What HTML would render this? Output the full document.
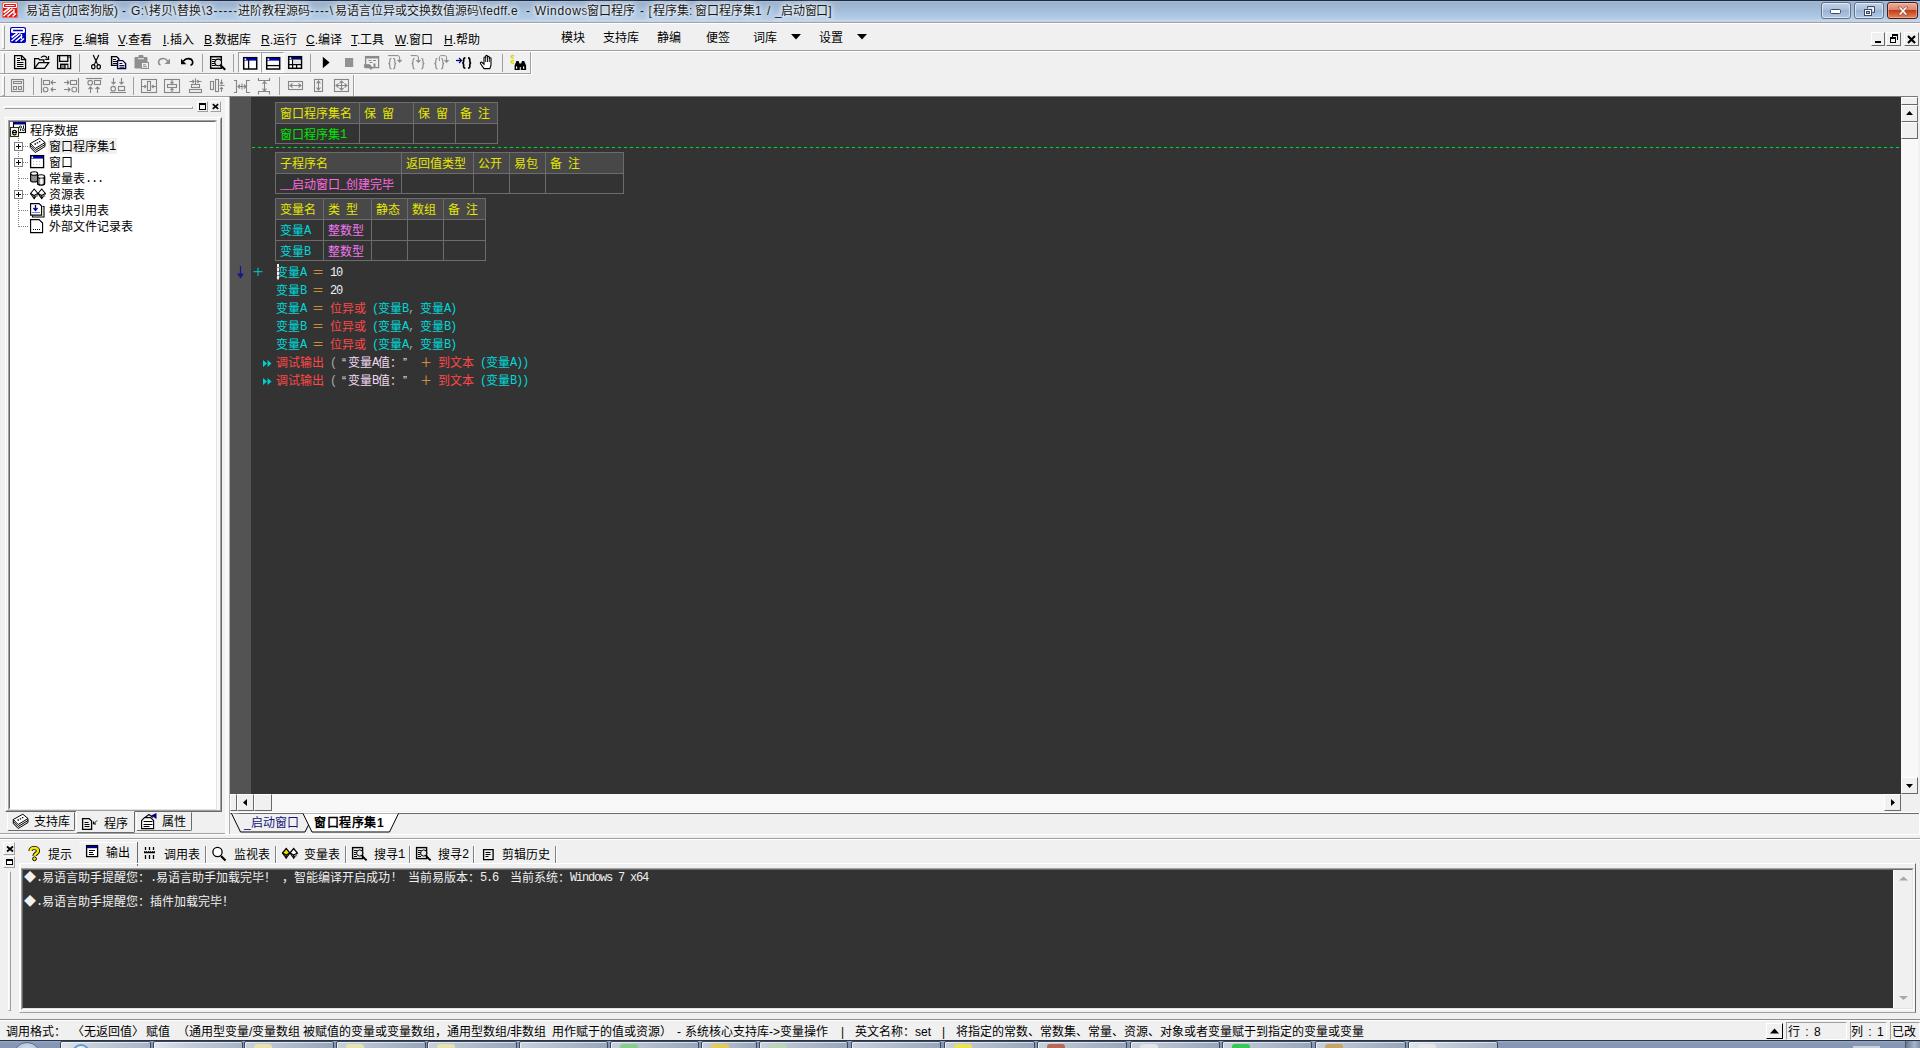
<!DOCTYPE html>
<html lang="zh-CN">
<head>
<meta charset="utf-8">
<title>易语言</title>
<style>
html,body{margin:0;padding:0;}
body{width:1920px;height:1048px;position:relative;overflow:hidden;background:#f0f0f0;font-family:"Liberation Sans",sans-serif;font-size:12px;color:#000;}
div,span,svg{position:absolute;box-sizing:border-box;}
svg{overflow:visible;}
.t{white-space:pre;line-height:12px;height:12px;font-size:12px;}
.m{font-family:"Liberation Mono",monospace;font-size:12px;letter-spacing:-1.2px;}
.j{white-space:nowrap;text-align-last:justify;}
u{text-decoration:underline;text-underline-offset:1px;}
.hl{background:#a0a0a0;height:1px;}
.wl{background:#fff;height:1px;}
.vl{background:#a0a0a0;width:1px;}
.sep{width:2px;border-left:1px solid #a0a0a0;border-right:1px solid #fff;}
.btn{background:#f0f0f0;border:1px solid;border-color:#fff #696969 #696969 #fff;}
.sunk{border:1px solid;border-color:#a0a0a0 #fff #fff #a0a0a0;}
/* title */
#title{left:0;top:0;width:1920px;height:23px;background:linear-gradient(#1b2a44 0,#1b2a44 1px,#a9bbd4 1px,#a9bbd4 2px,#9fb3cc 2px,#9db5d0 5px,#a2bdda 10px,#adc8e5 16px,#b4cee9 19px,#c6d3e5 20px,#c6d3e5 22px,#9ba1af 22px,#9ba1af 23px);}
#title .t{color:#1a1a1a;text-shadow:0 0 4px #fff,0 0 6px #fff,0 0 8px rgba(255,255,255,.8);}
.cap{top:2px;height:17px;border:1px solid #5f708c;border-radius:3px;background:linear-gradient(#c3d2e6,#a9bedb 45%,#9bb3d4 50%,#b1c8e3);box-shadow:inset 0 0 0 1px rgba(255,255,255,.55);}
/* editor */
#ed{background:#333;}
#gut{left:0;top:0;width:21px;height:697px;background:#535353;}
.tb{border-collapse:collapse;}
.c{border:1px solid #6c6c6c;height:22px;background:#333;}
.h{background:#484848;}
.y{color:#e6e600}.g{color:#00e600}.p{color:#ff6ae0}.cy{color:#00d8d8}.r{color:#ff4848}.o{color:#e8a040}.w{color:#f0f0f0}.lp{color:#f0d8f0}.gy{color:#a8a8a8}.p2{color:#f078f0}
/* output */
#out{left:22px;top:868px;width:1874px;height:140px;background:#333;}
</style>
</head>
<body>

<!-- ===== TITLE BAR ===== -->
<div id="title">
  <svg id="appico" style="left:2px;top:2px" width="16" height="16" viewBox="0 0 16 16"><rect x="0" y="0" width="16" height="16" rx="2.500" fill="#d81818"/><rect x="0.500" y="0.500" width="15" height="15" rx="2" fill="none" stroke="#ff8a70" stroke-width=".8"/><rect x="1" y="1" width="14" height="5" rx="1.200" fill="#fff"/><rect x="2" y="2" width="12" height="3" rx=".4" fill="#d81818"/><rect x="3.500" y="3" width="9" height="1" fill="#fff"/><path d="M1.500 10.500l6-4.500M1.500 14l9-7.500M5.500 14.500l6.500-5.500M10.500 14.500l3.500-3" stroke="#fff" stroke-width="1.600" fill="none"/><path d="M12 7v5" stroke="#fff" stroke-width="1.300"/></svg>
  <span class="t j" style="left:26px;top:5px;width:92.02px">易语言(加密狗版)</span>
  <span class="t" style="left:122px;top:5px">-</span>
  <span class="t" style="left:131px;top:5px;letter-spacing:.5px">G:\</span>
  <span class="t j" style="left:149px;top:5px;width:24.02px">拷贝</span>
  <span class="t" style="left:173px;top:5px">\</span>
  <span class="t j" style="left:177px;top:5px;width:24.02px">替换</span>
  <span class="t" style="left:202px;top:5px">\</span>
  <span class="t" style="left:206px;top:5px;letter-spacing:.9px">3-----</span>
  <span class="t j" style="left:238px;top:5px;width:72.02px">进阶教程源码</span>
  <span class="t" style="left:310px;top:5px;letter-spacing:.95px">----\</span>
  <span class="t j" style="left:335px;top:5px;width:144.02px">易语言位异或交换数值源码</span>
  <span class="t" style="left:479px;top:5px;letter-spacing:.3px">\fedff.e</span>
  <span class="t" style="left:526px;top:5px;letter-spacing:.7px">- Windows</span>
  <span class="t j" style="left:587px;top:5px;width:48.02px">窗口程序</span>
  <span class="t" style="left:640px;top:5px;letter-spacing:.6px">- [</span>
  <span class="t j" style="left:653px;top:5px;width:39.36px">程序集:</span>
  <span class="t j" style="left:695px;top:5px;width:66.71px">窗口程序集1</span>
  <span class="t" style="left:767px;top:5px">/</span>
  <span class="t j" style="left:775px;top:5px;letter-spacing:-.3px;width:56.24px">_启动窗口]</span>
  <div class="cap" style="left:1821px;width:30px"><svg style="left:8px;top:6px" width="12" height="6" viewBox="0 0 12 6"><rect x="0.5" y="0.5" width="10" height="4" rx="1" fill="#fff" stroke="#3c4a63"/></svg></div>
  <div class="cap" style="left:1854px;width:30px"><svg style="left:8px;top:2px" width="12" height="12" viewBox="0 0 12 12"><path d="M4.5 3.5v-2h7v6h-2" fill="none" stroke="#3c4a63" stroke-width="1"/><path d="M5 2.5h6v4h-1.5v-3h-4.5z" fill="#fff"/><rect x="1.5" y="4.5" width="7" height="6" fill="#fff" stroke="#3c4a63"/><rect x="3.5" y="6.5" width="3" height="2" fill="#b0c4de" stroke="#3c4a63"/></svg></div>
  <div class="cap" style="left:1887px;width:31px;border-color:#4a1c18;background:linear-gradient(#e8b0a0,#dc8468 45%,#c43c1e 50%,#d8683c 80%,#e08c5c);box-shadow:inset 0 0 0 1px rgba(255,200,180,.5)"><svg style="left:9px;top:3px" width="12" height="10" viewBox="0 0 12 10"><path d="M1 1h3l2 2.5 2-2.5h3l-3.5 4 3.5 4h-3l-2-2.5-2 2.5h-3l3.5-4z" fill="#fff" stroke="#7a3a30" stroke-width=".6"/></svg></div>
</div>
<div class="wl" style="left:0;top:23px;width:1920px"></div>

<!-- ===== MENU BAR ===== -->
<div id="menu" style="left:0;top:24px;width:1920px;height:26px">
  <div style="left:2px;top:1px;width:3px;height:24px;border:1px solid;border-color:#fff #a0a0a0 #a0a0a0 #fff"></div>
  <svg id="mico" style="left:10px;top:3px" width="16" height="16" viewBox="0 0 16 16"><rect x="0" y="0" width="16" height="16" rx="2" fill="#0000c0"/><rect x="1" y="1" width="14" height="5" rx="1.500" fill="#fff"/><rect x="3" y="2.700" width="10" height="1.600" rx=".5" fill="#0000c0"/><path d="M1.5 10.5l6-4.5M1.5 14l9-7.5M5.5 14.5l6.5-5.5M10.5 14.5l3.5-3" stroke="#fff" stroke-width="1.6" fill="none"/><path d="M11.5 7v5" stroke="#fff" stroke-width="1.3"/></svg>
  <span class="t j" style="left:31px;top:10px;width:33.36px"><u>F</u>.程序</span>
  <span class="t j" style="left:74px;top:10px;width:35.38px"><u>E</u>.编辑</span>
  <span class="t j" style="left:118px;top:10px;width:34.27px"><u>V</u>.查看</span>
  <span class="t j" style="left:163px;top:10px;width:30.71px"><u>I</u>.插入</span>
  <span class="t j" style="left:204px;top:10px;width:47.38px"><u>B</u>.数据库</span>
  <span class="t j" style="left:261px;top:10px;width:36.04px"><u>R</u>.运行</span>
  <span class="t j" style="left:306px;top:10px;width:36.04px"><u>C</u>.编译</span>
  <span class="t j" style="left:351px;top:10px;width:33.36px"><u>T</u>.工具</span>
  <span class="t j" style="left:395px;top:10px;width:38.04px"><u>W</u>.窗口</span>
  <span class="t j" style="left:444px;top:10px;width:36.04px"><u>H</u>.帮助</span>
  <span class="t j" style="left:561px;top:8px;width:24.02px">模块</span>
  <span class="t j" style="left:603px;top:8px;width:36.02px">支持库</span>
  <span class="t j" style="left:657px;top:8px;width:24.02px">静编</span>
  <span class="t j" style="left:706px;top:8px;width:24.02px">便签</span>
  <span class="t j" style="left:753px;top:8px;width:24.02px">词库</span>
  <span class="t j" style="left:819px;top:8px;width:24.02px">设置</span>
  <svg style="left:791px;top:10px" width="10" height="6" viewBox="0 0 10 6"><path d="M0 0h10l-5 5.5z" fill="#000"/></svg>
  <svg style="left:857px;top:10px" width="10" height="6" viewBox="0 0 10 6"><path d="M0 0h10l-5 5.5z" fill="#000"/></svg>
  <div class="btn" style="left:1871px;top:8px;width:14px;height:14px"><div style="left:3px;top:8px;width:6px;height:2px;background:#000"></div></div>
  <div class="btn" style="left:1886px;top:8px;width:15px;height:14px"><svg style="left:2px;top:1px" width="10" height="10" viewBox="0 0 10 10" shape-rendering="crispEdges"><path d="M3 0h6v2h-6zM8 2h1v4h-1zM3 2h1v1h-1z" fill="#000"/><path d="M1 3h6v2h-6zM1 5h1v4h-1zM6 5h1v4h-1zM1 8h6v1h-6z" fill="#000"/></svg></div>
  <div class="btn" style="left:1904px;top:8px;width:15px;height:14px"><svg style="left:2px;top:2px" width="10" height="9" viewBox="0 0 10 9"><path d="M1 1l7 7M8 1l-7 7" stroke="#000" stroke-width="2.2"/></svg></div>
</div>
<div class="hl" style="left:0;top:50px;width:1920px"></div>
<div class="wl" style="left:0;top:51px;width:1920px"></div>


<!-- ===== TOOLBARS ===== -->
<div id="tb1" style="left:0;top:52px;width:532px;height:23px">
  <div style="left:2px;top:1px;width:3px;height:21px;border:1px solid;border-color:#fff #a0a0a0 #a0a0a0 #fff"></div>
  <div class="hl" style="left:0;top:21px;width:531px"></div><div class="wl" style="left:0;top:22px;width:532px"></div>
  <div class="vl" style="left:530px;top:0;height:22px"></div><div style="left:531px;top:0;width:1px;height:22px;background:#fff"></div>
  <div class="vl" style="left:79px;top:2px;height:18px"></div>
  <div class="vl" style="left:202px;top:2px;height:18px"></div>
  <div class="vl" style="left:233px;top:2px;height:18px"></div>
  <div class="vl" style="left:310px;top:2px;height:18px"></div>
  <div class="vl" style="left:502px;top:2px;height:18px"></div>
  <div style="left:238px;top:0;width:23px;height:21px;background:#f6f6f6;border:1px solid;border-color:#a0a0a0 #fff #fff #a0a0a0"></div>
  <div style="left:261px;top:0;width:23px;height:21px;background:#f6f6f6;border:1px solid;border-color:#a0a0a0 #fff #fff #a0a0a0"></div>
</div>
<svg id="ic1" style="left:0;top:0" width="540" height="100" viewBox="0 0 540 100" fill="none" stroke-width="1.3" stroke="#000">
 <!-- new -->
 <path d="M14.6 55.6h7l4 4v9h-11z"/><path d="M21.5 55.6v4h4"/><path d="M17 58.5h3M17 60.5h3M17 62.5h6.5M17 64.5h6.5M17 66.5h6.5" stroke-width="1"/>
 <!-- open -->
 <path d="M34.6 68.4v-9.8h4l1 1.2h4.2v2.8"/><path d="M34.6 68.4l4.2-5.8h10l-4.2 5.8z"/><path d="M41 57.6c1.6-2 5-2.2 6.4.8" stroke-width="1.1"/><path d="M48.6 56v3.4h-3.4" stroke-width="1.1"/>
 <!-- save -->
 <rect x="57.6" y="55.6" width="13" height="13"/><path d="M59.6 55.6v5.8h8.2v-5.8"/><rect x="60" y="63.6" width="8.4" height="5" fill="#000" stroke="none"/><rect x="61.2" y="65" width="3.2" height="3" fill="#888" stroke="none"/><rect x="65.6" y="65" width="1.8" height="3.4" fill="#f0f0f0" stroke="none"/><rect x="68.6" y="56.6" width="1" height="1.4" fill="#000" stroke="none"/>
 <!-- cut -->
 <path d="M93.2 55l4 8.4M98.8 55l-4 8.4" stroke-width="1.2"/><path d="M95 63.5l-1 1.2M97 63.5l1 1.2" stroke-width="1.1"/><ellipse cx="93.3" cy="66.7" rx="1.7" ry="2.1" stroke-width="1.2"/><ellipse cx="98.7" cy="66.7" rx="1.7" ry="2.1" stroke-width="1.2"/>
 <!-- copy -->
 <path d="M111.6 56.6h5l2.2 2.2v6.6h-7.2z" stroke-width="1.4"/><path d="M113 59.5h3M113 61.5h4M113 63.5h4" stroke-width="1"/>
 <path d="M117.6 60.6h5l3 3v5h-8z" fill="#fff" stroke="#000040" stroke-width="1.4"/><path d="M119.4 63.5h3M119.4 65.5h5M119.4 67.2h5" stroke="#000040" stroke-width="1"/>
 <!-- paste (disabled) -->
 <g stroke="none" fill="#8e8e8e"><rect x="134.5" y="57" width="13" height="11.5" rx="1"/><rect x="138.5" y="55" width="5" height="3" rx="1"/><rect x="138" y="58.2" width="6" height="1" fill="#eee"/><rect x="141" y="62" width="8" height="7" fill="#8e8e8e"/><rect x="142" y="63" width="6" height="5" fill="#f0f0f0"/><rect x="143" y="64.3" width="3" height="1" /><rect x="143" y="66.2" width="4" height="1"/></g>
 <!-- redo (disabled) -->
 <path d="M160.5 65.2c-3-1.6-2.6-6.2 2.2-6.6 2.4-.2 4 1 5.2 2.6" stroke="#8e8e8e" stroke-width="1.5"/><path d="M170 58.6v5.4h-5.4z" fill="#8e8e8e" stroke="none"/>
 <!-- undo -->
 <path d="M190.5 65.4c3.4-1.6 3-6.4-2-6.8-2.4-.2-4 1-5.2 2.6" stroke-width="1.6"/><path d="M181 58.8v5.4h5.4z" fill="#000" stroke="none"/>
 <!-- find -->
 <rect x="210.7" y="56.7" width="10.6" height="11.6" stroke-width="1.5"/><path d="M212 59.5h3.5M212 61.5h3M212 63.5h3M212 65.5h3.5" stroke-width="1"/><circle cx="218.2" cy="62.4" r="3.3" fill="#e8e8e8" stroke-width="1.1"/><path d="M217 61.3h.1M219.4 61.3h.1M217 63.6h.1M219.4 63.6h.1" stroke="#666" stroke-width="1"/><path d="M220.6 65.2l4.6 4.6" stroke-width="2"/>
 <!-- layout 1 (pressed) -->
 <rect x="243.7" y="57.7" width="13" height="11.3" fill="#fff" stroke-width="1.5"/><rect x="244" y="58" width="12.4" height="2.6" fill="#0000a8" stroke="none"/><rect x="244.6" y="58.4" width="1.6" height="1.6" fill="#fff" stroke="none"/><path d="M248.6 60v9" stroke-width="1.3"/>
 <!-- layout 2 (pressed) -->
 <rect x="266.7" y="57.7" width="13" height="11.3" fill="#fff" stroke-width="1.5"/><rect x="267" y="58" width="12.4" height="2.6" fill="#0000a8" stroke="none"/><rect x="267.6" y="58.4" width="1.6" height="1.6" fill="#fff" stroke="none"/><path d="M266.7 65.6h13" stroke-width="1.3"/>
 <!-- layout 3 -->
 <rect x="288.7" y="56.7" width="12.8" height="11.6" fill="#fff" stroke-width="1.5"/><rect x="289" y="57" width="12.2" height="2.6" fill="#00006a" stroke="none"/><rect x="289.6" y="57.4" width="1.6" height="1.6" fill="#fff" stroke="none"/><path d="M292.6 59.5v9M288.7 64.6h13M296.6 65v3.5" stroke-width="1.3"/><rect x="293.4" y="60.4" width="7" height="3.4" fill="#ddd" stroke="none"/>
 <!-- play / stop -->
 <path d="M322.8 56.8v11.4l6.8-5.7z" fill="#000" stroke="none"/><rect x="345" y="58" width="8.2" height="9" fill="#929292" stroke="none"/>
 <!-- debug window (disabled) -->
 <g stroke="#8a8a8a"><rect x="365.6" y="56.6" width="13" height="11"/><path d="M365 57.5h14" stroke-width="2"/><path d="M368.5 60.5h3M373 60.5h3M369.5 62.5h3" stroke-width="1"/><path d="M364.4 64.6h5.4l2.6 3.4-1.4 1.6-2.2-2.2h-4.4z" fill="#8a8a8a" stroke-width=".8"/><path d="M374.5 63.5v3.6" stroke-width="2"/></g>
 <!-- step over / into / out (disabled) -->
 <g stroke="#8a8a8a" stroke-width="1.2">
  <path d="M391.4 58.4c-1.6 0-1.6.6-1.6 2v1.8c0 1-.4 1.4-1.4 1.4 1 0 1.4.4 1.4 1.4v1.8c0 1.4 0 2 1.6 2"/><path d="M393.2 58.4c1.6 0 1.6.6 1.6 2v1.8c0 1 .4 1.4 1.4 1.4-1 0-1.4.4-1.4 1.4v1.8c0 1.4 0 2-1.6 2"/>
  <path d="M388 55.6h9c2 0 2.6.8 2.6 2.6v3.4" stroke-width="1"/><path d="M397.4 60.2l2.2 2.4 2.2-2.4z" fill="#8a8a8a" stroke-width=".6"/>
  <path d="M414.6 58.4c-1.6 0-1.6.6-1.6 2v1.8c0 1-.4 1.4-1.4 1.4 1 0 1.4.4 1.4 1.4v1.8c0 1.4 0 2 1.6 2"/><path d="M421.4 58.4c1.6 0 1.6.6 1.6 2v1.8c0 1 .4 1.4 1.4 1.4-1 0-1.4.4-1.4 1.4v1.8c0 1.4 0 2-1.6 2"/>
  <path d="M410.6 55.6h5.6c1.6 0 2.2.8 2.2 2.4v3.6" stroke-width="1"/><path d="M416.2 60.4l2.2 2.4 2.2-2.4z" fill="#8a8a8a" stroke-width=".6"/>
  <path d="M437.4 58.4c-1.6 0-1.6.6-1.6 2v1.8c0 1-.4 1.4-1.4 1.4 1 0 1.4.4 1.4 1.4v1.8c0 1.4 0 2 1.6 2"/><path d="M441.2 58.4c1.6 0 1.6.6 1.6 2v1.8c0 1 .4 1.4 1.4 1.4-1 0-1.4.4-1.4 1.4v1.8c0 1.4 0 2-1.6 2"/>
  <path d="M439.4 61v-3.4c0-1.400.6-2 2-2h3c1.600 0 2.200.6 2.200 2.200v3.800" stroke-width="1"/><path d="M444.400 60.400l2.200 2.400 2.200-2.400z" fill="#8a8a8a" stroke-width=".6"/>
 </g>
 <!-- run to cursor -->
 <path d="M456 60.500h5" stroke="#000080" stroke-width="1.300"/><path d="M459 58l2.600 2.500-2.600 2.500" stroke="#000080" stroke-width="1.200"/>
 <path d="M465.400 57.800c-1.800 0-1.800.8-1.800 2.200v1.600c0 1-.4 1.400-1.400 1.400 1 0 1.400.4 1.400 1.400v1.600c0 1.600 0 2.200 1.800 2.200" stroke-width="1.700"/><path d="M468 57.800c1.800 0 1.800.8 1.800 2.200v1.600c0 1 .4 1.400 1.400 1.400-1 0-1.400.4-1.400 1.400v1.600c0 1.600 0 2.200-1.800 2.200" stroke-width="1.700"/>
 <!-- hand -->
 <path d="M484 68.600l-3.400-4.800c-.8-1.200.4-2.200 1.500-1.300l1.900 1.800v-6.300c0-1.300 1.700-1.300 1.700 0v-1.700c0-1.300 1.800-1.300 1.800 0v1c0-1.300 1.800-1.300 1.800 0v1.300c0-1.200 1.700-1.200 1.700 0v6c0 2-.6 2.800-1.200 4z" stroke-width="1.100" fill="#fff"/><path d="M485.700 58v4M487.500 57v5M489.300 58v4" stroke-width=".9"/>
 <!-- binoculars -->
 <g stroke="none" fill="#000"><path d="M514.600 70v-4.600l1.800-4.400h2.200l1.200 4v5z"/><path d="M520.800 70v-5l1.200-4h2.200l1.900 4.400v4.600z"/><rect x="519" y="63.500" width="3" height="3.500"/><rect x="516" y="66.500" width="1.200" height="2.200" fill="#fff"/><rect x="523" y="66.500" width="1.200" height="2.200" fill="#fff"/></g>
 <path d="M514 56.200c-.8-1-3-.8-3 .6s1.400 1.200 2.800 1.600M514 61.200c-.8-1-3-.8-3 .6s1.600 1.400 3 1.800" stroke="#d8d800" stroke-width="1.400"/>
</svg>
<div id="tb2" style="left:0;top:75px;width:355px;height:23px">
  <div style="left:2px;top:1px;width:3px;height:20px;border:1px solid;border-color:#fff #a0a0a0 #a0a0a0 #fff"></div>
  <div class="vl" style="left:353px;top:0;height:21px"></div><div style="left:354px;top:0;width:1px;height:21px;background:#fff"></div>
  <div class="vl" style="left:33px;top:2px;height:18px"></div>
  <div class="vl" style="left:133px;top:2px;height:18px"></div>
  <div class="vl" style="left:279px;top:2px;height:18px"></div>
</div>
<svg id="ic2" style="left:0;top:0" width="400" height="100" viewBox="0 0 400 100" fill="none" stroke-width="1.1" stroke="#868686">
 <!-- 1 -->
 <rect x="11.500" y="79.500" width="12" height="12"/><rect x="13.500" y="81.500" width="8" height="2"/><rect x="13.500" y="86.500" width="3" height="3"/><rect x="18.500" y="86.500" width="3" height="3"/>
 <!-- 2 align left -->
 <path d="M41.500 78v15"/><rect x="43.500" y="80.500" width="6" height="4"/><path d="M56 82.500h-5M53 80.500l-2 2 2 2"/><circle cx="45.600" cy="89.500" r="2.300"/><path d="M56 89.500h-5M53 87.500l-2 2 2 2"/>
 <!-- 3 align right -->
 <path d="M78.500 78v15"/><rect x="70.500" y="80.500" width="6" height="4"/><path d="M64 82.500h5M67 80.500l2 2-2 2"/><rect x="72" y="87.200" width="4.500" height="4.600" rx="1.500"/><path d="M64 89.500h6M68 87.500l2 2-2 2"/>
 <!-- 4 align top -->
 <path d="M86 78.500h16"/><circle cx="90.200" cy="82.700" r="2.300"/><rect x="94.500" y="80.500" width="6" height="4"/><path d="M90.500 93v-6M88.500 89l2-2 2 2M97.500 93v-6M95.500 89l2-2 2 2"/>
 <!-- 5 align bottom -->
 <path d="M110 92.500h16"/><path d="M113.500 78v6M111.500 82l2 2 2-2M121.500 78v6M119.500 82l2 2 2-2"/><circle cx="113.200" cy="88.700" r="2.300"/><rect x="118.500" y="86.500" width="6" height="4"/>
 <!-- 6 -->
 <rect x="141.500" y="79.500" width="15" height="13"/><rect x="147.500" y="81.500" width="3" height="9"/><path d="M142 86.500h4M144.500 85l1.500 1.500-1.500 1.500M156 86.500h-4M153.500 85l-1.500 1.500 1.500 1.500"/>
 <!-- 7 -->
 <rect x="164.500" y="79.500" width="15" height="13"/><rect x="167.500" y="84.500" width="9" height="3"/><path d="M172 80v3.500M170.500 82l1.500 1.500 1.500-1.500M172 92v-3.500M170.500 90l1.500-1.500 1.500 1.500"/>
 <!-- 8 -->
 <path d="M195.500 78.500v5.500M189.500 81.500h4.500M192.500 80l1.500 1.500-1.500 1.500M201.500 81.500h-4.500M198.500 80l-1.500 1.500 1.500 1.500"/><rect x="191.500" y="84.500" width="8" height="3"/><rect x="189.500" y="89.500" width="12" height="3"/>
 <!-- 9 -->
 <rect x="210.500" y="81.500" width="3" height="8"/><rect x="215.500" y="79.500" width="3" height="12"/><path d="M219.500 85.500h5M221.500 79.500v4.500M220 82.500l1.500 1.500 1.500-1.500M221.500 92v-4.500M220 89l1.500-1.500 1.500 1.500"/>
 <!-- 10 -->
 <path d="M234 80.500h2.500v12h-2.500M250 80.500h-3.500v12h3.500"/><path d="M238 86.500h8M242 83.500v6M240 84.500l-2 2 2 2M244 84.500l2 2-2 2"/>
 <!-- 11 -->
 <path d="M258.500 78v2.500h11v-2.500M258.500 94.500v-3h11v3"/><path d="M264.500 81.500v9.500M262.500 84l2-2.500 2 2.500M262.500 88.500l2 2.500 2-2.500"/>
 <!-- 12 -->
 <rect x="288.500" y="81.500" width="14" height="8"/><path d="M290 85.500h11M292.500 83.500l-2.500 2 2.500 2M298.500 83.500l2.500 2-2.500 2"/>
 <!-- 13 -->
 <rect x="314.500" y="79.500" width="8" height="12"/><path d="M318.500 81v9M316.500 83.500l2-2.500 2 2.500M316.500 87.500l2 2.500 2-2.500"/>
 <!-- 14 -->
 <rect x="334.500" y="79.500" width="14" height="12"/><path d="M336 85.500h11M341.500 81v9M338.500 83.500l-2.500 2 2.500 2M344.500 83.500l2.500 2-2.500 2M339.500 83l2-2 2 2M339.500 88l2 2 2-2"/>
</svg>
<div class="hl" style="left:0;top:96px;width:355px"></div>


<!-- ===== LEFT PANEL ===== -->
<div class="wl" style="left:0;top:97px;width:226px"></div>
<div style="left:4px;top:106px;width:189px;height:3px;border:1px solid;border-color:#fff #a0a0a0 #a0a0a0 #fff"></div>
<div class="btn" style="left:197px;top:101px;width:11px;height:11px;border-color:#fff #a0a0a0 #a0a0a0 #fff"><svg style="left:1px;top:1px" width="8" height="8" viewBox="0 0 8 8" shape-rendering="crispEdges"><path d="M.5 .5h6v6h-6z" fill="none" stroke="#000" stroke-width="1"/><path d="M0 1h7" stroke="#000" stroke-width="2"/></svg></div>
<div class="btn" style="left:210px;top:101px;width:11px;height:11px;border-color:#fff #a0a0a0 #a0a0a0 #fff"><svg style="left:1px;top:1px" width="8" height="8" viewBox="0 0 8 8"><path d="M.8 1.200l5.400 4.600M6.200 1.200l-5.400 4.600" stroke="#000" stroke-width="1.700"/></svg></div>
<div style="left:5px;top:117px;width:217px;height:695px;border:1px solid;border-color:#fff #696969 #696969 #fff;background:#f8f8f8"></div>
<div style="left:6px;top:118px;width:215px;height:693px;border:1px solid;border-color:#f0f0f0 #a0a0a0 #a0a0a0 #f0f0f0"></div>
<div style="left:8px;top:120px;width:209px;height:690px;background:#fff;border:1px solid;border-color:#a0a0a0 #e3e3e3 #e3e3e3 #a0a0a0"></div>
<div style="left:9px;top:121px;width:207px;height:688px;border:1px solid;border-color:#696969 #fff #fff #696969"></div>
<svg style="left:0;top:0" width="226" height="240" viewBox="0 0 226 240" shape-rendering="crispEdges"><g stroke="#808080" stroke-width="1" stroke-dasharray="1 1" fill="none"><path d="M18.500 138v89"/><path d="M23 146.500h5"/><path d="M23 162.500h5"/><path d="M19 178.500h9"/><path d="M23 194.500h5"/><path d="M19 210.500h9"/><path d="M19 226.500h9"/></g>
<rect x="14.500" y="142.500" width="8" height="8" fill="#fff" stroke="#808080"/><path d="M16 146.500h5M18.500 144v5" stroke="#000" stroke-width="1"/>
<rect x="14.500" y="158.500" width="8" height="8" fill="#fff" stroke="#808080"/><path d="M16 162.500h5M18.500 160v5" stroke="#000" stroke-width="1"/>
<rect x="14.500" y="190.500" width="8" height="8" fill="#fff" stroke="#808080"/><path d="M16 194.500h5M18.500 192v5" stroke="#000" stroke-width="1"/>
</svg>
<div style="left:48px;top:138px;width:69px;height:16px;background:#f0f0f0"></div>
<span class="t j" style="left:30px;top:125px;width:48.02px">程序数据</span>
<span class="t j" style="left:49px;top:141px;width:60.02px">窗口程序集</span>
<span class="t m  " style="left:109px;top:141px">1</span>
<span class="t j" style="left:49px;top:157px;width:24.02px">窗口</span>
<span class="t j" style="left:49px;top:173px;width:36.02px">常量表</span>
<span class="t m  " style="left:85px;top:173px">...</span>
<span class="t j" style="left:49px;top:189px;width:36.02px">资源表</span>
<span class="t j" style="left:49px;top:205px;width:60.02px">模块引用表</span>
<span class="t j" style="left:49px;top:221px;width:84.02px">外部文件记录表</span>
<svg style="left:0;top:0" width="60" height="240" viewBox="0 0 60 240" fill="none" stroke="#000" stroke-width="1.100">
 <!-- root -->
 <rect x="13.500" y="122.500" width="12" height="10" fill="#fff"/><rect x="13" y="122" width="13" height="2.500" fill="#000080" stroke="none"/>
 <circle cx="20.500" cy="127" r="1.100" stroke-width=".9"/><circle cx="23.300" cy="129.600" r="1.100" stroke-width=".9"/><path d="M23.500 125.500v2.500M20.500 129v2" stroke-width=".9"/>
 <rect x="10.500" y="127.500" width="8" height="9" fill="#fff" stroke="#303000"/><path d="M12.500 132.600h4c0-3-4-3-4 0s2.500 2.600 4 1.400" stroke-width="1.100"/>
 <!-- stack -->
 <path d="M30.3 143.5L39.8 138.2L45.0 142.5L35.2 148.5z" fill="#fff" stroke-width="1"/><path d="M30.3 143.5V147.5L35.2 152.5L45.0 146.5V142.5M30.3 145.5L35.2 150.5L45.0 144.5" stroke-width="1"/><path d="M35.2 144.0h.1M37.4 142.8h.1M39.6 141.6h.1" stroke-width="1.300" stroke-linecap="square"/>
 <!-- window -->
 <rect x="30.600" y="155.600" width="13" height="12" fill="#fff" stroke-width="1.300"/><rect x="31" y="156" width="12.300" height="2.600" fill="#0000a8" stroke="none"/><rect x="31.600" y="156.500" width="1.500" height="1.500" fill="#fff" stroke="none"/><path d="M33 161.500h9M33 164.500h9" stroke="#c0c0c0" stroke-dasharray="1 2"/>
 <!-- cylinders -->
 <path d="M30.600 173.500v7c0 2 7 2 7 0v-7" fill="#909090"/><ellipse cx="34.100" cy="173.500" rx="3.500" ry="1.800" fill="#fff"/>
 <path d="M37.600 176.500v7c0 2 7 2 7 0v-7" fill="#909090"/><ellipse cx="41.100" cy="176.500" rx="3.500" ry="1.800" fill="#fff"/><path d="M41.500 178.500v6.500" stroke="#fff" stroke-width="2.500"/><path d="M37.600 176.500v7c0 2 7 2 7 0v-7"/>
 <!-- diamonds -->
 <path d="M30.500 193.500l3.700-4.500 3.700 4.500-3.700 5z" fill="#fff"/><path d="M30.500 193.500l3.700 2 3.700-2M34.200 195.500v3.500"/><path d="M34.400 196l3.200-2v3z" fill="#808080" stroke="none"/>
 <path d="M38 193.500l3.700-4.500 3.700 4.500-3.700 5z" fill="#fff"/><path d="M38 193.500l3.700 2 3.700-2M41.700 195.500v3.500"/><path d="M41.900 196l3.200-2v3z" fill="#808080" stroke="none"/>
 <!-- module ref -->
 <path d="M32.500 215.500v1.500h11.500v-10.500h-1.500" /><path d="M30.600 203.600h8.500l2.500 2.500v9h-11z" fill="#fff"/><path d="M35.500 205v5M33.500 208l2 2.500 2-2.500" stroke="#0000a0" stroke-width="1.300"/><path d="M32.500 212.500h7" stroke="#0000a0" stroke-dasharray="1 1"/>
 <!-- file -->
 <path d="M30.600 219.600h8.500l3.500 3.500v9.500h-12z" fill="#fff"/><path d="M33 229.500h7" stroke-dasharray="1 1"/>
</svg>
<div style="left:7px;top:812px;width:68px;height:19px;border:1px solid;border-color:#f0f0f0 #696969 #696969 #fff;border-radius:0 0 2px 2px"></div>
<div style="left:76px;top:811px;width:59px;height:22px;background:#f0f0f0;border:1px solid;border-color:#f0f0f0 #696969 #696969 #fff;border-radius:0 0 2px 2px"></div>
<div style="left:136px;top:812px;width:56px;height:19px;border:1px solid;border-color:#f0f0f0 #696969 #696969 #fff;border-radius:0 0 2px 2px"></div>
<svg style="left:0;top:800px" width="200" height="40" viewBox="0 800 200 40" fill="none" stroke="#000" stroke-width="1.100">
 <path d="M13.3 819.5L22.8 814.2L28.0 818.5L18.2 824.5z" fill="#fff" stroke-width="1"/><path d="M13.3 819.5V823.5L18.2 828.5L28.0 822.5V818.5M13.3 821.5L18.2 826.5L28.0 820.5" stroke-width="1"/><path d="M18.2 820.0h.1M20.4 818.8h.1M22.6 817.6h.1" stroke-width="1.300" stroke-linecap="square"/>
 <path d="M82.600 818.600h6.500l2.500 2.500v8.300h-9z" stroke-width="1.300"/><path d="M84.500 822.500h4M84.500 824.500h5M84.500 826.500h5" stroke-width="1"/><path d="M97 820.500l-3.500 3.500M93.500 821.500v2.500h2.500" stroke-width="1"/>
 <path d="M141.600 828.600v-8l3-3h6l3 3v8z" fill="#fff"/><path d="M143.500 821.500h9M143.500 824.500h9M143.500 826.500h6" stroke-width="1"/><path d="M145 817.500l4-3 4 3" /><path d="M151 815.500l5.500-2.500v6z" fill="#000080" stroke="none"/>
</svg>
<div class="hl" style="left:0;top:833px;width:226px"></div>
<span class="t j" style="left:34px;top:816px;width:36.02px">支持库</span>
<span class="t j" style="left:104px;top:818px;width:24.02px">程序</span>
<span class="t j" style="left:162px;top:816px;width:24.02px">属性</span>
<!-- ===== EDITOR ===== -->
<div style="left:225px;top:97px;width:4px;height:737px;background:#f8f8f8"></div><div style="left:229px;top:97px;width:1px;height:737px;background:#b0b0b0"></div>
<div style="left:229px;top:96px;width:1689px;height:1px;background:#7a7a7a"></div>
<div id="ed" style="left:230px;top:97px;width:1671px;height:697px"><div id="gut"></div>
<div class="c h" style="left:45px;top:5px;width:85px;height:22px"></div>
<div class="c h" style="left:129px;top:5px;width:55px;height:22px"></div>
<div class="c h" style="left:183px;top:5px;width:43px;height:22px"></div>
<div class="c h" style="left:225px;top:5px;width:43px;height:22px"></div>
<div class="c" style="left:45px;top:26px;width:85px;height:21px"></div>
<div class="c" style="left:129px;top:26px;width:55px;height:21px"></div>
<div class="c" style="left:183px;top:26px;width:43px;height:21px"></div>
<div class="c" style="left:225px;top:26px;width:43px;height:21px"></div>
<span class="t y j" style="left:50px;top:11px;width:72.02px">窗口程序集名</span>
<span class="t y j" style="left:134px;top:11px;width:12.02px">保</span>
<span class="t y j" style="left:152px;top:11px;width:12.02px">留</span>
<span class="t y j" style="left:188px;top:11px;width:12.02px">保</span>
<span class="t y j" style="left:206px;top:11px;width:12.02px">留</span>
<span class="t y j" style="left:230px;top:11px;width:12.02px">备</span>
<span class="t y j" style="left:248px;top:11px;width:12.02px">注</span>
<span class="t g j" style="left:50px;top:32px;width:60.02px">窗口程序集</span>
<span class="t m g " style="left:110px;top:32px">1</span>
<div style="left:22px;top:50px;width:1649px;height:1px;background:repeating-linear-gradient(90deg,#20c040 0,#20c040 3px,#0a5a1a 3px,#0a5a1a 6px)"></div>
<div class="c h" style="left:45px;top:55px;width:127px;height:22px"></div>
<div class="c h" style="left:171px;top:55px;width:73px;height:22px"></div>
<div class="c h" style="left:243px;top:55px;width:37px;height:22px"></div>
<div class="c h" style="left:279px;top:55px;width:37px;height:22px"></div>
<div class="c h" style="left:315px;top:55px;width:79px;height:22px"></div>
<div class="c" style="left:45px;top:76px;width:127px;height:21px"></div>
<div class="c" style="left:171px;top:76px;width:73px;height:21px"></div>
<div class="c" style="left:243px;top:76px;width:37px;height:21px"></div>
<div class="c" style="left:279px;top:76px;width:37px;height:21px"></div>
<div class="c" style="left:315px;top:76px;width:79px;height:21px"></div>
<span class="t y j" style="left:50px;top:61px;width:48.02px">子程序名</span>
<span class="t y j" style="left:176px;top:61px;width:60.02px">返回值类型</span>
<span class="t y j" style="left:248px;top:61px;width:24.02px">公开</span>
<span class="t y j" style="left:284px;top:61px;width:24.02px">易包</span>
<span class="t y j" style="left:320px;top:61px;width:12.02px">备</span>
<span class="t y j" style="left:338px;top:61px;width:12.02px">注</span>
<span class="t m p " style="left:50px;top:82px">__</span>
<span class="t p j" style="left:62px;top:82px;width:48.02px">启动窗口</span>
<span class="t m p " style="left:110px;top:82px">_</span>
<span class="t p j" style="left:116px;top:82px;width:48.02px">创建完毕</span>
<div class="c h" style="left:45px;top:101px;width:49px;height:22px"></div>
<div class="c h" style="left:93px;top:101px;width:49px;height:22px"></div>
<div class="c h" style="left:141px;top:101px;width:37px;height:22px"></div>
<div class="c h" style="left:177px;top:101px;width:37px;height:22px"></div>
<div class="c h" style="left:213px;top:101px;width:43px;height:22px"></div>
<div class="c" style="left:45px;top:122px;width:49px;height:22px"></div>
<div class="c" style="left:93px;top:122px;width:49px;height:22px"></div>
<div class="c" style="left:141px;top:122px;width:37px;height:22px"></div>
<div class="c" style="left:177px;top:122px;width:37px;height:22px"></div>
<div class="c" style="left:213px;top:122px;width:43px;height:22px"></div>
<div class="c" style="left:45px;top:143px;width:49px;height:21px"></div>
<div class="c" style="left:93px;top:143px;width:49px;height:21px"></div>
<div class="c" style="left:141px;top:143px;width:37px;height:21px"></div>
<div class="c" style="left:177px;top:143px;width:37px;height:21px"></div>
<div class="c" style="left:213px;top:143px;width:43px;height:21px"></div>
<span class="t y j" style="left:50px;top:107px;width:36.02px">变量名</span>
<span class="t y j" style="left:98px;top:107px;width:12.02px">类</span>
<span class="t y j" style="left:116px;top:107px;width:12.02px">型</span>
<span class="t y j" style="left:146px;top:107px;width:24.02px">静态</span>
<span class="t y j" style="left:182px;top:107px;width:24.02px">数组</span>
<span class="t y j" style="left:218px;top:107px;width:12.02px">备</span>
<span class="t y j" style="left:236px;top:107px;width:12.02px">注</span>
<span class="t cy j" style="left:50px;top:128px;width:24.02px">变量</span>
<span class="t m cy " style="left:74px;top:128px">A</span>
<span class="t p2 j" style="left:98px;top:128px;width:36.02px">整数型</span>
<span class="t cy j" style="left:50px;top:149px;width:24.02px">变量</span>
<span class="t m cy " style="left:74px;top:149px">B</span>
<span class="t p2 j" style="left:98px;top:149px;width:36.02px">整数型</span>
<span class="t cy j" style="left:46px;top:170px;width:24.02px">变量</span>
<span class="t m cy " style="left:70px;top:170px">A</span>
<span class="t o j" style="left:82px;top:170px;width:12.02px">＝</span>
<span class="t m w " style="left:100px;top:170px">10</span>
<span class="t cy j" style="left:46px;top:188px;width:24.02px">变量</span>
<span class="t m cy " style="left:70px;top:188px">B</span>
<span class="t o j" style="left:82px;top:188px;width:12.02px">＝</span>
<span class="t m w " style="left:100px;top:188px">20</span>
<span class="t cy j" style="left:46px;top:206px;width:24.02px">变量</span>
<span class="t m cy " style="left:70px;top:206px">A</span>
<span class="t o j" style="left:82px;top:206px;width:12.02px">＝</span>
<span class="t r j" style="left:100px;top:206px;width:36.02px">位异或</span>
<span class="t m cy " style="left:142px;top:206px">(</span>
<span class="t cy j" style="left:148px;top:206px;width:24.02px">变量</span>
<span class="t m cy " style="left:172px;top:206px">B</span>
<span class="t m gy " style="left:178px;top:206px">,</span>
<span class="t cy j" style="left:190px;top:206px;width:24.02px">变量</span>
<span class="t m cy " style="left:214px;top:206px">A)</span>
<span class="t cy j" style="left:46px;top:224px;width:24.02px">变量</span>
<span class="t m cy " style="left:70px;top:224px">B</span>
<span class="t o j" style="left:82px;top:224px;width:12.02px">＝</span>
<span class="t r j" style="left:100px;top:224px;width:36.02px">位异或</span>
<span class="t m cy " style="left:142px;top:224px">(</span>
<span class="t cy j" style="left:148px;top:224px;width:24.02px">变量</span>
<span class="t m cy " style="left:172px;top:224px">A</span>
<span class="t m gy " style="left:178px;top:224px">,</span>
<span class="t cy j" style="left:190px;top:224px;width:24.02px">变量</span>
<span class="t m cy " style="left:214px;top:224px">B)</span>
<span class="t cy j" style="left:46px;top:242px;width:24.02px">变量</span>
<span class="t m cy " style="left:70px;top:242px">A</span>
<span class="t o j" style="left:82px;top:242px;width:12.02px">＝</span>
<span class="t r j" style="left:100px;top:242px;width:36.02px">位异或</span>
<span class="t m cy " style="left:142px;top:242px">(</span>
<span class="t cy j" style="left:148px;top:242px;width:24.02px">变量</span>
<span class="t m cy " style="left:172px;top:242px">A</span>
<span class="t m gy " style="left:178px;top:242px">,</span>
<span class="t cy j" style="left:190px;top:242px;width:24.02px">变量</span>
<span class="t m cy " style="left:214px;top:242px">B)</span>
<span class="t r j" style="left:46px;top:260px;width:48.02px">调试输出</span>
<span class="t m gy " style="left:100px;top:260px">(</span>
<span class="t lp " style="left:112px;top:260px">“</span>
<span class="t lp j" style="left:118px;top:260px;width:24.02px">变量</span>
<span class="t m lp " style="left:142px;top:260px">A</span>
<span class="t lp j" style="left:148px;top:260px;width:24.02px">值：</span>
<span class="t lp " style="left:173px;top:260px">”</span>
<span class="t o j" style="left:190px;top:260px;width:12.02px">＋</span>
<span class="t r j" style="left:208px;top:260px;width:36.02px">到文本</span>
<span class="t m cy " style="left:250px;top:260px">(</span>
<span class="t cy j" style="left:256px;top:260px;width:24.02px">变量</span>
<span class="t m cy " style="left:280px;top:260px">A))</span>
<svg style="left:33px;top:263px" width="9" height="7" viewBox="0 0 9 7"><path d="M0 0l4 3.500-4 3.500zM4.500 0l4 3.500-4 3.500z" fill="#00d0d0"/></svg>
<span class="t r j" style="left:46px;top:278px;width:48.02px">调试输出</span>
<span class="t m gy " style="left:100px;top:278px">(</span>
<span class="t lp " style="left:112px;top:278px">“</span>
<span class="t lp j" style="left:118px;top:278px;width:24.02px">变量</span>
<span class="t m lp " style="left:142px;top:278px">B</span>
<span class="t lp j" style="left:148px;top:278px;width:24.02px">值：</span>
<span class="t lp " style="left:173px;top:278px">”</span>
<span class="t o j" style="left:190px;top:278px;width:12.02px">＋</span>
<span class="t r j" style="left:208px;top:278px;width:36.02px">到文本</span>
<span class="t m cy " style="left:250px;top:278px">(</span>
<span class="t cy j" style="left:256px;top:278px;width:24.02px">变量</span>
<span class="t m cy " style="left:280px;top:278px">B))</span>
<svg style="left:33px;top:281px" width="9" height="7" viewBox="0 0 9 7"><path d="M0 0l4 3.500-4 3.500zM4.500 0l4 3.500-4 3.500z" fill="#00d0d0"/></svg>
<svg style="left:6px;top:169px" width="10" height="13" viewBox="0 0 10 13"><path d="M4.500 0v9" stroke="#14148c" stroke-width="1.200" fill="none"/><path d="M1 7.500l3.500 5 3.500-5z" fill="#14148c"/></svg>
<svg style="left:23px;top:170px" width="10" height="10" viewBox="0 0 10 10"><path d="M5 .5v8.500M.5 4.700h9" stroke="#00d0d0" stroke-width="1" fill="none"/></svg>
<div style="left:47px;top:167px;width:2px;height:16px;background:repeating-linear-gradient(#ffe8e8 0,#ffe8e8 3px,#e06060 3px,#e06060 4px)"></div>
</div>
<div id="vsb" style="left:1901px;top:97px;width:17px;height:697px;background:#f8f8f8">
 <div class="btn" style="left:0;top:0;width:17px;height:8px"></div>
 <div class="btn" style="left:0;top:8px;width:17px;height:17px"><svg style="left:4px;top:5px" width="7" height="4" viewBox="0 0 7 4"><path d="M0 4h7l-3.500-4z" fill="#000"/></svg></div>
 <div class="btn" style="left:0;top:25px;width:17px;height:17px"></div>
 <div class="btn" style="left:0;top:680px;width:17px;height:17px"><svg style="left:4px;top:6px" width="7" height="4" viewBox="0 0 7 4"><path d="M0 0h7l-3.500 4z" fill="#000"/></svg></div>
</div>
<div id="hsb" style="left:230px;top:794px;width:1671px;height:17px;background:#f8f8f8">
 <div class="btn" style="left:0;top:0;width:7px;height:17px"></div>
 <div class="btn" style="left:7px;top:0;width:17px;height:17px"><svg style="left:5px;top:4px" width="4" height="7" viewBox="0 0 4 7"><path d="M4 0v7l-4-3.500z" fill="#000"/></svg></div>
 <div class="btn" style="left:24px;top:0;width:18px;height:17px"></div>
 <div class="btn" style="left:1654px;top:0;width:17px;height:17px"><svg style="left:6px;top:4px" width="4" height="7" viewBox="0 0 4 7"><path d="M0 0v7l4-3.500z" fill="#000"/></svg></div>
</div>
<div style="left:230px;top:812px;width:1689px;height:1px;background:#fff"></div><div style="left:230px;top:813px;width:1689px;height:1px;background:#696969"></div><div style="left:1919px;top:813px;width:1px;height:21px;background:#fff"></div>
<svg style="left:226px;top:813px" width="200" height="22" viewBox="0 0 200 22">
 <path d="M5.500 .5l9 18.500h64.500l7-14" fill="#f0f0f0" stroke="#000" stroke-width="1"/>
 <path d="M77 .5l9 18.500h77.500l9-18.500z" fill="#fff" stroke="none"/>
 <path d="M77 .5l9 18.500h77.500l9-18.500" fill="none" stroke="#000" stroke-width="1"/>
</svg>
<span class="t j" style="left:244px;top:817px;color:#141478;width:54.71px">_启动窗口</span>
<span class="t j" style="left:314px;top:817px;font-weight:bold;letter-spacing:.6px;width:70.30px">窗口程序集1</span>
<!-- ===== SPLIT LINES ===== -->
<div class="wl" style="left:0;top:834px;width:1920px;height:1px"></div>
<div class="hl" style="left:0;top:838px;width:1920px"></div><div class="wl" style="left:0;top:839px;width:1920px"></div>
<!-- ===== OUTPUT ===== -->
<div class="btn" style="left:3px;top:842px;width:12px;height:13px;border-color:#fff #a0a0a0 #a0a0a0 #fff"><svg style="left:2px;top:3px" width="8" height="6" viewBox="0 0 8 6"><path d="M1 .5l6 5M7 .5l-6 5" stroke="#000" stroke-width="1.700"/></svg></div>
<div class="btn" style="left:3px;top:856px;width:12px;height:12px;border-color:#fff #a0a0a0 #a0a0a0 #fff"><svg style="left:2px;top:2px" width="8" height="7" viewBox="0 0 8 7" shape-rendering="crispEdges"><path d="M.5 .5h6v5h-6z" fill="#fff" stroke="#000"/><path d="M0 1h7" stroke="#000" stroke-width="2"/></svg></div>
<div style="left:8px;top:871px;width:3px;height:140px;border:1px solid;border-color:#fff #a0a0a0 #a0a0a0 #fff"></div>
<div style="left:78px;top:842px;width:60px;height:24px;border-right:1px solid #696969"></div>
<div style="left:79px;top:842px;width:58px;height:1px;background:#fff"></div>
<div style="left:205px;top:846px;width:2px;height:17px;border-left:1px solid #808080;border-right:1px solid #fff"></div>
<div style="left:275px;top:846px;width:2px;height:17px;border-left:1px solid #808080;border-right:1px solid #fff"></div>
<div style="left:345px;top:846px;width:2px;height:17px;border-left:1px solid #808080;border-right:1px solid #fff"></div>
<div style="left:409px;top:846px;width:2px;height:17px;border-left:1px solid #808080;border-right:1px solid #fff"></div>
<div style="left:473px;top:846px;width:2px;height:17px;border-left:1px solid #808080;border-right:1px solid #fff"></div>
<div style="left:555px;top:846px;width:2px;height:17px;border-left:1px solid #808080;border-right:1px solid #fff"></div>
<span class="t j" style="left:48px;top:849px;width:24.02px">提示</span>
<span class="t j" style="left:106px;top:847px;width:24.02px">输出</span>
<span class="t j" style="left:164px;top:849px;width:36.02px">调用表</span>
<span class="t j" style="left:234px;top:849px;width:36.02px">监视表</span>
<span class="t j" style="left:304px;top:849px;width:36.02px">变量表</span>
<span class="t j" style="left:374px;top:849px;width:24.02px">搜寻</span>
<span class="t m  " style="left:398px;top:849px">1</span>
<span class="t j" style="left:438px;top:849px;width:24.02px">搜寻</span>
<span class="t m  " style="left:462px;top:849px">2</span>
<span class="t j" style="left:502px;top:849px;width:48.02px">剪辑历史</span>
<svg style="left:0;top:840px" width="560" height="28" viewBox="0 840 560 28" fill="none" stroke="#000" stroke-width="1.200">
 <!-- ? -->
 <path d="M30.500 851c0-4 7.500-4 7.500 0 0 2.500-3.500 2.500-3.500 5" stroke="#000" stroke-width="4.200"/><path d="M30.500 851c0-4 7.500-4 7.500 0 0 2.500-3.500 2.500-3.500 5" stroke="#f4e800" stroke-width="2.400"/><circle cx="34.500" cy="858.800" r="1.900" fill="#f4e800" stroke-width="1"/>
 <!-- output -->
 <rect x="86.600" y="845.600" width="11" height="11" fill="#fff" stroke-width="1.300"/><rect x="87" y="846" width="10.400" height="2.200" fill="#000080" stroke="none"/><path d="M89 850.500h6M89 852.500h4M89 854.500h5" stroke-width="1"/>
 <!-- call table -->
 <g stroke-width="1.300"><path d="M145.500 847v3M149.500 847v3M153.500 847v3M144 852.500h11M145.500 855v4M149.500 855v4M153.500 855v4" /><path d="M144.300 851l1.200 1.500 1.200-1.500M148.300 851l1.200 1.500 1.200-1.500M152.300 851l1.200 1.500 1.200-1.500" stroke-width="1"/></g>
 <!-- watch -->
 <circle cx="217.500" cy="852" r="4.600" fill="#fff" stroke-width="1.300"/><path d="M221 856l4.500 4.500" stroke-width="2.200"/>
 <!-- var table -->
 <path d="M282.500 853l3.700-4.500 3.700 4.500-3.700 5z" fill="#f0e000"/><path d="M282.500 853l3.700 2 3.700-2M286.200 855v3.500"/>
 <path d="M290 853l3.700-4.500 3.700 4.500-3.700 5z" fill="#fff"/><path d="M290 853l3.700 2 3.700-2M293.700 855v3.500"/><path d="M293.900 855.500l3.200-2v3z" fill="#808080" stroke="none"/>
 <!-- find1 find2 -->
 <g id="f1"><rect x="352.600" y="847.600" width="10" height="11" stroke-width="1.400"/><path d="M354 850.500h3M354 852.500h2.500M354 854.500h2.500M354 856.500h3" stroke-width="1"/><circle cx="359.700" cy="853" r="3.100" fill="#e8e8e8" stroke-width="1"/><path d="M362 856l4.600 4.400" stroke-width="1.900"/></g>
 <g transform="translate(64 0)"><rect x="352.600" y="847.600" width="10" height="11" stroke-width="1.400"/><path d="M354 850.500h3M354 852.500h2.500M354 854.500h2.500M354 856.500h3" stroke-width="1"/><circle cx="359.700" cy="853" r="3.100" fill="#e8e8e8" stroke-width="1"/><path d="M362 856l4.600 4.400" stroke-width="1.900"/></g>
 <!-- clip history -->
 <path d="M483.600 849.600h6.500l3 0v10h-9.500z" stroke-width="1.300"/><path d="M485.500 852.500h5M485.500 854.500h5M485.500 856.500h3" stroke-width="1"/>
</svg>
<div style="left:19px;top:863px;width:1897px;height:150px;border:1px solid;border-color:#fff #696969 #a0a0a0 #fff"></div>
<div style="left:20px;top:864px;width:1px;height:148px;background:#fff"></div>
<div style="left:21px;top:868px;width:1893px;height:142px;border:1px solid;border-color:#a0a0a0 #fff #fff #a0a0a0"></div>
<div style="left:22px;top:869px;width:1891px;height:140px;border:1px solid;border-color:#696969 #e3e3e3 #e3e3e3 #696969"></div>
<div id="out" style="left:23px;top:870px;width:1870px;height:138px"></div>
<div style="left:1893px;top:870px;width:19px;height:138px;background:#f0f0f0;border-left:1px solid #fff"><svg style="left:5px;top:6px" width="9" height="5" viewBox="0 0 9 5"><path d="M0 4.500l4.500-4 4.500 4z" fill="#a8a8a8"/></svg><svg style="left:5px;top:126px" width="9" height="5" viewBox="0 0 9 5"><path d="M0 0l4.500 4 4.500-4z" fill="#a8a8a8"/></svg></div>
<span class="t w " style="left:24px;top:872px">◆</span>
<span class="t m w " style="left:36px;top:872px">.</span>
<span class="t w j" style="left:42px;top:872px;width:108.02px">易语言助手提醒您：</span>
<span class="t m w " style="left:150px;top:872px">.</span>
<span class="t w j" style="left:156px;top:872px;width:120.02px">易语言助手加载完毕！</span>
<span class="t w j" style="left:282px;top:872px;width:108.02px">，智能编译开启成功</span>
<span class="t m w " style="left:390px;top:872px">!</span>
<span class="t w j" style="left:408px;top:872px;width:72.02px">当前易版本：</span>
<span class="t m w " style="left:480px;top:872px">5.6</span>
<span class="t w j" style="left:510px;top:872px;width:60.02px">当前系统：</span>
<span class="t m w " style="left:570px;top:872px">Windows 7 x64</span>
<span class="t w " style="left:24px;top:896px">◆</span>
<span class="t m w " style="left:36px;top:896px">.</span>
<span class="t w j" style="left:42px;top:896px;width:192.02px">易语言助手提醒您：插件加载完毕！</span>
<!-- ===== STATUS ===== -->
<div class="hl" style="left:0;top:1019px;width:1920px;background:#8c8c8c"></div><div class="wl" style="left:0;top:1020px;width:1920px"></div>
<span class="t j" style="left:6px;top:1026px;width:60.02px">调用格式：</span>
<span class="t j" style="left:72px;top:1026px;width:72.02px">〈无返回值〉</span>
<span class="t j" style="left:146px;top:1026px;width:24.02px">赋值</span>
<span class="t j" style="left:177px;top:1026px;width:123.36px">（通用型变量/变量数组</span>
<span class="t j" style="left:303px;top:1026px;width:144.02px">被赋值的变量或变量数组，</span>
<span class="t j" style="left:447px;top:1026px;width:99.36px">通用型数组/非数组</span>
<span class="t j" style="left:552px;top:1026px;width:120.02px">用作赋于的值或资源）</span>
<span class="t" style="left:677px;top:1026px">-</span>
<span class="t j" style="left:685px;top:1026px;width:143.04px">系统核心支持库-&gt;变量操作</span>
<span class="t" style="left:841px;top:1026px">|</span>
<span class="t j" style="left:855px;top:1026px;width:76.04px">英文名称：set</span>
<span class="t" style="left:942px;top:1026px">|</span>
<span class="t j" style="left:956px;top:1026px;width:408.02px">将指定的常数、常数集、常量、资源、对象或者变量赋于到指定的变量或变量</span>
<div style="left:1766px;top:1023px;width:17px;height:16px;border:1px solid;border-color:#fff #000 #000 #fff;background:#f0f0f0"><svg style="left:3px;top:4px" width="9" height="6" viewBox="0 0 9 6"><path d="M0 5.500l4.500-5 4.500 5z" fill="#000"/></svg></div>
<div class="sunk" style="left:1786px;top:1022px;width:61px;height:18px"></div>
<div class="sunk" style="left:1850px;top:1022px;width:37px;height:18px"></div>
<div class="sunk" style="left:1890px;top:1022px;width:30px;height:18px"></div>
<span class="t j" style="left:1788px;top:1026px;letter-spacing:1px;width:33.71px">行 : 8</span><span class="t j" style="left:1851px;top:1026px;letter-spacing:1px;width:33.71px">列 : 1</span><span class="t j" style="left:1892px;top:1026px;width:24.02px">已改</span>
<!-- ===== TASKBAR SLIVER ===== -->
<div id="task" style="left:0;top:1040px;width:1920px;height:8px;background:linear-gradient(#2a3446 0,#2a3446 1px,#98a8c2 1px,#8798b6 3px,#8596b4 8px);overflow:hidden">
<div style="left:13px;top:2px;width:28px;height:28px;border-radius:14px;border:1px solid #5a6c88;background:radial-gradient(circle at 50% 30%,#d8e4f0,#9cb0cc 70%)"></div>
<div style="left:60px;top:1px;width:91px;height:9px;border:1px solid #3c485c;border-radius:2px 2px 0 0;background:linear-gradient(90deg,#dfe4ec,#c4ccd8 40%,#a8b3c6);box-shadow:inset 1px 1px 0 rgba(255,255,255,.6)"></div>
<div style="left:153px;top:1px;width:90px;height:9px;border:1px solid #3c485c;border-radius:2px 2px 0 0;background:linear-gradient(90deg,#dfe4ec,#c4ccd8 40%,#a8b3c6);box-shadow:inset 1px 1px 0 rgba(255,255,255,.6)"></div>
<div style="left:244px;top:1px;width:90px;height:9px;border:1px solid #3c485c;border-radius:2px 2px 0 0;background:linear-gradient(90deg,#c9d0dc,#b0bacb 50%,#98a5bb);box-shadow:inset 1px 1px 0 rgba(255,255,255,.6)"></div>
<div style="left:254px;top:4px;width:18px;height:6px;border-radius:3px 3px 0 0;background:#efe6a8;opacity:.85"></div>
<div style="left:336px;top:1px;width:90px;height:9px;border:1px solid #3c485c;border-radius:2px 2px 0 0;background:linear-gradient(90deg,#c9d0dc,#b0bacb 50%,#98a5bb);box-shadow:inset 1px 1px 0 rgba(255,255,255,.6)"></div>
<div style="left:346px;top:4px;width:18px;height:6px;border-radius:3px 3px 0 0;background:#efe6a8;opacity:.85"></div>
<div style="left:427px;top:1px;width:90px;height:9px;border:1px solid #3c485c;border-radius:2px 2px 0 0;background:linear-gradient(90deg,#c9d0dc,#b0bacb 50%,#98a5bb);box-shadow:inset 1px 1px 0 rgba(255,255,255,.6)"></div>
<div style="left:437px;top:4px;width:18px;height:6px;border-radius:3px 3px 0 0;background:#efe6a8;opacity:.85"></div>
<div style="left:519px;top:1px;width:89px;height:9px;border:1px solid #3c485c;border-radius:2px 2px 0 0;background:linear-gradient(90deg,#c9d0dc,#b0bacb 50%,#98a5bb);box-shadow:inset 1px 1px 0 rgba(255,255,255,.6)"></div>
<div style="left:610px;top:1px;width:89px;height:9px;border:1px solid #3c485c;border-radius:2px 2px 0 0;background:linear-gradient(90deg,#c9d0dc,#b0bacb 50%,#98a5bb);box-shadow:inset 1px 1px 0 rgba(255,255,255,.6)"></div>
<div style="left:620px;top:4px;width:18px;height:6px;border-radius:3px 3px 0 0;background:#7fd07f;opacity:.85"></div>
<div style="left:701px;top:1px;width:56px;height:9px;border:1px solid #3c485c;border-radius:2px 2px 0 0;background:linear-gradient(90deg,#c9d0dc,#b0bacb 50%,#98a5bb);box-shadow:inset 1px 1px 0 rgba(255,255,255,.6)"></div>
<div style="left:711px;top:4px;width:18px;height:6px;border-radius:3px 3px 0 0;background:#e8d040;opacity:.85"></div>
<div style="left:759px;top:1px;width:89px;height:9px;border:1px solid #3c485c;border-radius:2px 2px 0 0;background:linear-gradient(90deg,#c9d0dc,#b0bacb 50%,#98a5bb);box-shadow:inset 1px 1px 0 rgba(255,255,255,.6)"></div>
<div style="left:769px;top:4px;width:18px;height:6px;border-radius:3px 3px 0 0;background:#b8d8b0;opacity:.85"></div>
<div style="left:851px;top:1px;width:90px;height:9px;border:1px solid #3c485c;border-radius:2px 2px 0 0;background:linear-gradient(90deg,#c9d0dc,#b0bacb 50%,#98a5bb);box-shadow:inset 1px 1px 0 rgba(255,255,255,.6)"></div>
<div style="left:944px;top:1px;width:91px;height:9px;border:1px solid #3c485c;border-radius:2px 2px 0 0;background:linear-gradient(90deg,#c9d0dc,#b0bacb 50%,#98a5bb);box-shadow:inset 1px 1px 0 rgba(255,255,255,.6)"></div>
<div style="left:954px;top:4px;width:18px;height:6px;border-radius:3px 3px 0 0;background:#f0e840;opacity:.85"></div>
<div style="left:1037px;top:1px;width:90px;height:9px;border:1px solid #3c485c;border-radius:2px 2px 0 0;background:linear-gradient(90deg,#c9d0dc,#b0bacb 50%,#98a5bb);box-shadow:inset 1px 1px 0 rgba(255,255,255,.6)"></div>
<div style="left:1047px;top:4px;width:18px;height:6px;border-radius:3px 3px 0 0;background:#b05a40;opacity:.85"></div>
<div style="left:1130px;top:1px;width:90px;height:9px;border:1px solid #3c485c;border-radius:2px 2px 0 0;background:linear-gradient(90deg,#c9d0dc,#b0bacb 50%,#98a5bb);box-shadow:inset 1px 1px 0 rgba(255,255,255,.6)"></div>
<div style="left:1140px;top:4px;width:18px;height:6px;border-radius:3px 3px 0 0;background:#e8e8e8;opacity:.85"></div>
<div style="left:1222px;top:1px;width:90px;height:9px;border:1px solid #3c485c;border-radius:2px 2px 0 0;background:linear-gradient(90deg,#c9d0dc,#b0bacb 50%,#98a5bb);box-shadow:inset 1px 1px 0 rgba(255,255,255,.6)"></div>
<div style="left:1232px;top:4px;width:18px;height:6px;border-radius:3px 3px 0 0;background:#20c840;opacity:.85"></div>
<div style="left:1315px;top:1px;width:91px;height:9px;border:1px solid #3c485c;border-radius:2px 2px 0 0;background:linear-gradient(90deg,#c9d0dc,#b0bacb 50%,#98a5bb);box-shadow:inset 1px 1px 0 rgba(255,255,255,.6)"></div>
<div style="left:1325px;top:4px;width:18px;height:6px;border-radius:3px 3px 0 0;background:#c8a050;opacity:.85"></div>
<div style="left:1408px;top:1px;width:90px;height:9px;border:1px solid #3c485c;border-radius:2px 2px 0 0;background:linear-gradient(90deg,#dfe4ec,#c4ccd8 40%,#a8b3c6);box-shadow:inset 1px 1px 0 rgba(255,255,255,.6)"></div>
<div style="left:1418px;top:4px;width:18px;height:6px;border-radius:3px 3px 0 0;background:#e8e8e8;opacity:.85"></div>
<div style="left:72px;top:4px;width:18px;height:18px;border-radius:9px;background:#eaf2fa;border:2px solid #6a9ad0"></div>
<div style="left:1853px;top:6px;width:27px;height:2px;background:rgba(255,255,255,.55)"></div>
<div style="left:1905px;top:1px;width:15px;height:8px;border-left:1px solid #4a566a;background:linear-gradient(90deg,#687890,#a8b4c8 60%,#8090a8)"></div>
</div>
</body>
</html>
